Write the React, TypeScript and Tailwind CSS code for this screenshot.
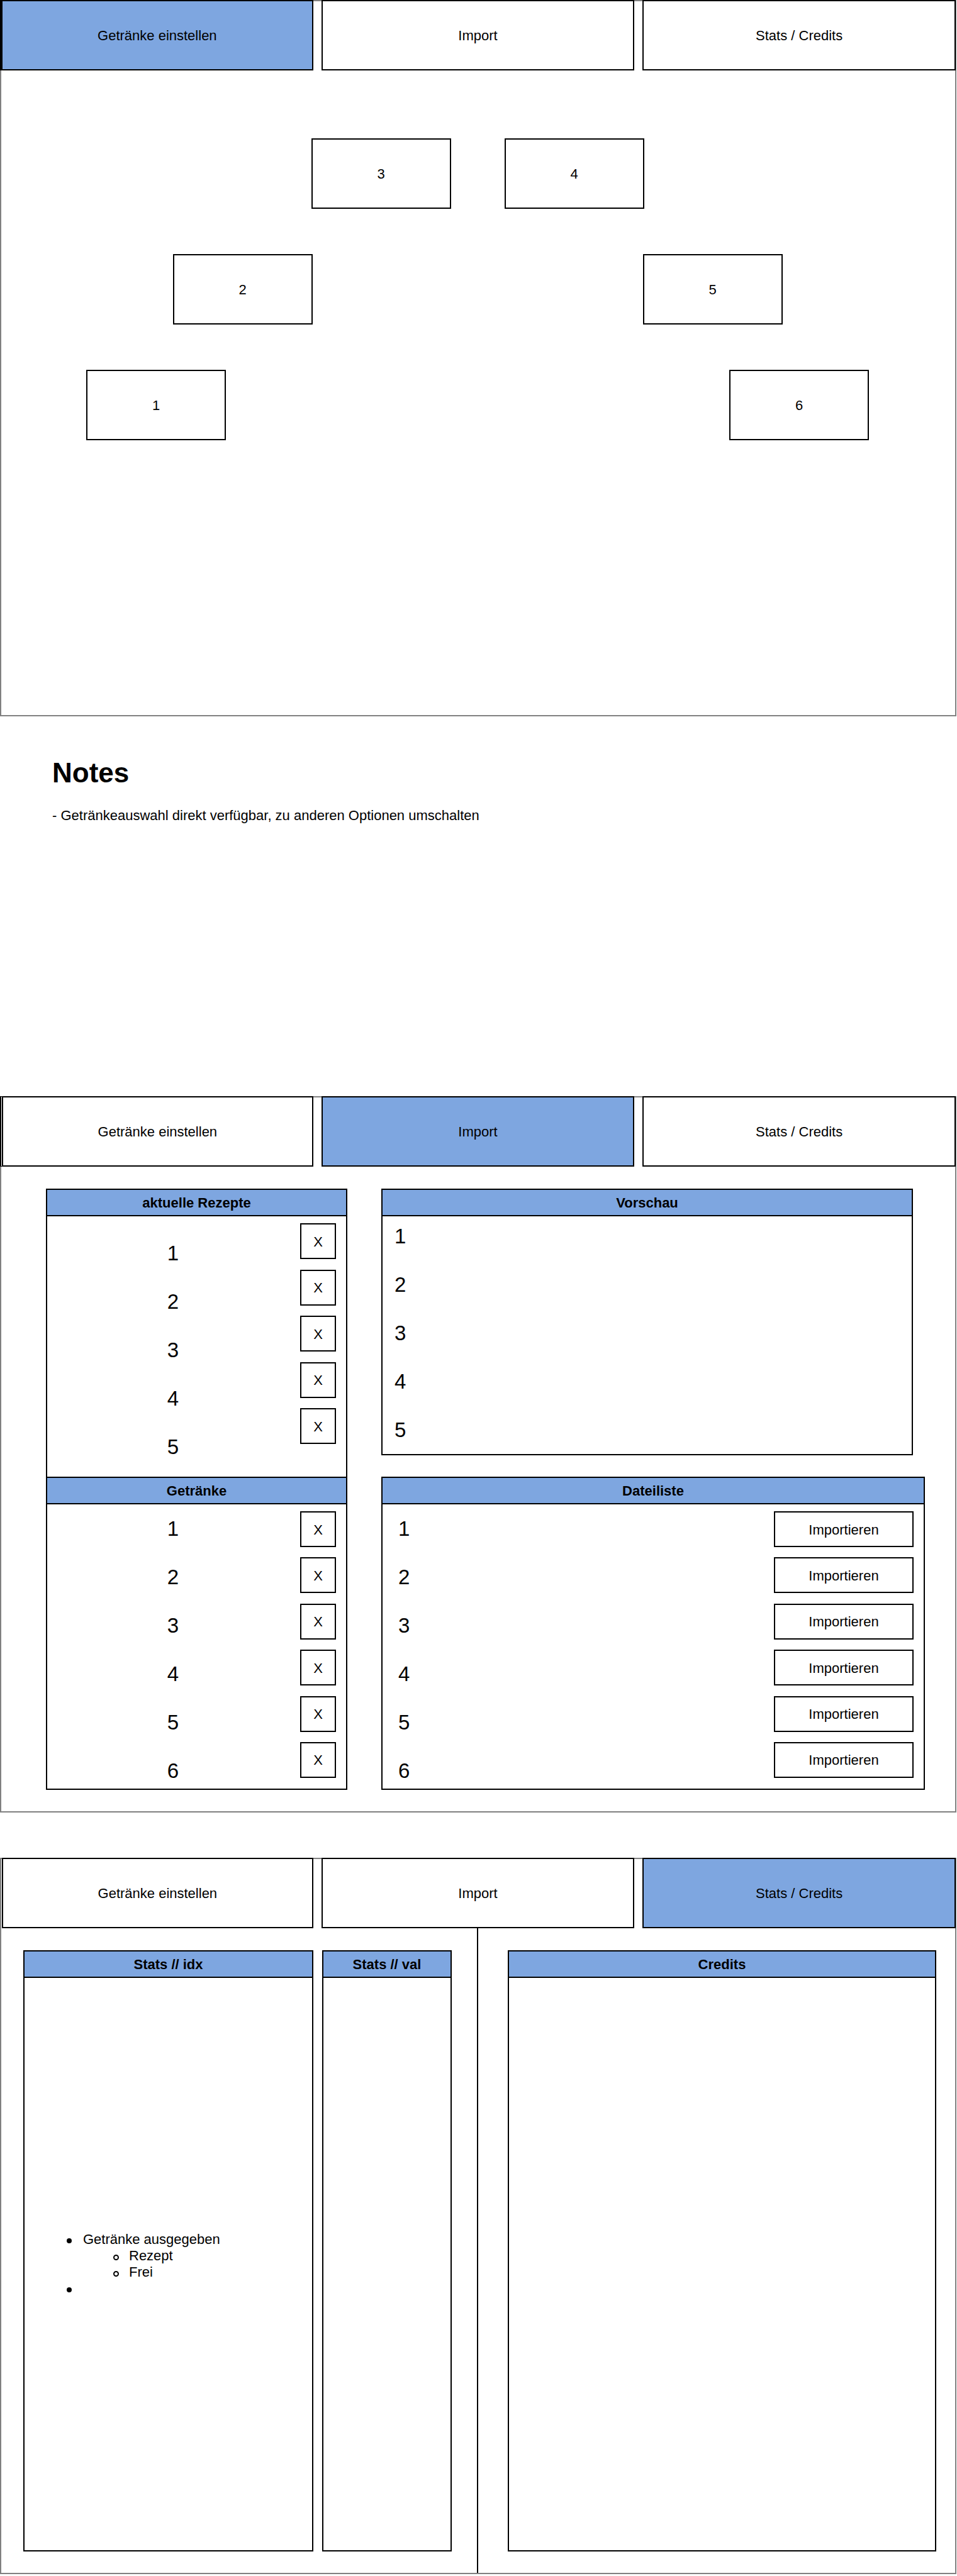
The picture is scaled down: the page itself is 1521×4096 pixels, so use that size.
import type { ReactNode } from "react";

const TAB_LABELS = ["Getränke einstellen", "Import", "Stats / Credits"];

function Screen({
  active,
  firstTabClass,
  className = "",
  children,
}: {
  active: number;
  firstTabClass: string;
  className?: string;
  children: ReactNode;
}) {
  return (
    <section
      className={`mr-px flex min-h-[1139px] flex-col border-2 border-[#808080] bg-white ${className}`}
    >
      <nav className="-mt-0.5 -mr-px -ml-0.5 grid grid-cols-3 gap-[13px]">
        {TAB_LABELS.map((label, i) => (
          <button
            key={label}
            type="button"
            aria-pressed={i === active}
            className={`h-28 border-2 border-black pt-0.5 ${
              i === active ? "bg-[#7ea6e0]" : "bg-white"
            } ${i === 0 ? firstTabClass : ""}`}
          >
            {label}
          </button>
        ))}
      </nav>
      {children}
    </section>
  );
}

function Panel({
  title,
  className = "",
  children,
}: {
  title: string;
  className?: string;
  children?: ReactNode;
}) {
  return (
    <section className={`flex flex-col border-2 border-black bg-white ${className}`}>
      <h2 className="flex h-[42px] shrink-0 items-center justify-center border-b-2 border-black bg-[#7ea6e0] pt-0.5 font-bold">
        {title}
      </h2>
      {children}
    </section>
  );
}

function Numbers({ count, className = "" }: { count: number; className?: string }) {
  return (
    <ol className={`flex flex-1 flex-col gap-[39px] text-[33px] leading-[38px] ${className}`}>
      {Array.from({ length: count }, (_, i) => (
        <li key={i}>{i + 1}</li>
      ))}
    </ol>
  );
}

function ButtonColumn({
  count,
  label,
  className = "",
}: {
  count: number;
  label: string;
  className?: string;
}) {
  return (
    <div className={`mt-[11px] mr-4 flex flex-col justify-between ${className}`}>
      {Array.from({ length: count }, (_, i) => (
        <button
          key={i}
          type="button"
          aria-label={`${label} ${i + 1}`}
          className="h-[57px] w-full border-2 border-black bg-white pt-0.5"
        >
          {label}
        </button>
      ))}
    </div>
  );
}

function DrinkRow({ items, className }: { items: number[]; className: string }) {
  return (
    <div className={`flex justify-center ${className}`}>
      {items.map((n) => (
        <button
          key={n}
          type="button"
          className="h-28 w-[222px] border-2 border-black bg-white pt-0.5"
        >
          {n}
        </button>
      ))}
    </div>
  );
}

function Bullet({ hollow = false }: { hollow?: boolean }) {
  return (
    <span
      aria-hidden="true"
      className={`mt-[11px] shrink-0 rounded-full ${
        hollow ? "mr-4 size-[9px] border-2 border-black" : "mr-[18px] size-2 bg-black"
      }`}
    />
  );
}

export default function App() {
  return (
    <main className="bg-white font-['Liberation_Sans',Arial,sans-serif] text-[22px] leading-[26px] text-black">
      <Screen active={0} firstTabClass="border-l-4">
        <div className="flex flex-col gap-[72px] pt-[108px] pr-0.5">
          <DrinkRow items={[3, 4]} className="gap-[85px]" />
          <DrinkRow items={[2, 5]} className="gap-[525px]" />
          <DrinkRow items={[1, 6]} className="gap-[800px]" />
        </div>
      </Screen>

      <article className="min-h-[604px] px-[83px] pt-[65px]">
        <h1 className="text-[44px] leading-[50px] font-bold">Notes</h1>
        <p className="mt-[30px]">
          - Getränkeauswahl direkt verfügbar, zu anderen Optionen umschalten
        </p>
      </article>

      <Screen active={1} firstTabClass="border-l-[5px] [border-left-style:double]">
        <div className="grid grid-cols-[479fr_864fr] gap-[54px] pt-[35px] pr-12 pl-[71px]">
          <div className="flex flex-col">
            <Panel title="aktuelle Rezepte" className="min-h-[460px]">
              <div className="flex items-start">
                <Numbers count={5} className="mt-10 pr-0.5 text-center" />
                <ButtonColumn count={5} label="X" className="h-[351px] w-[57px]" />
              </div>
            </Panel>
            <Panel title="Getränke" className="-mt-0.5 min-h-[498px]">
              <div className="flex items-start">
                <Numbers count={6} className="mt-5 pr-0.5 text-center" />
                <ButtonColumn count={6} label="X" className="h-[424px] w-[57px]" />
              </div>
            </Panel>
          </div>
          <div className="flex flex-col gap-[34px]">
            <Panel title="Vorschau" className="mr-[19px] min-h-[424px]">
              <Numbers count={5} className="mt-[13px] pl-[19px]" />
            </Panel>
            <Panel title="Dateiliste" className="min-h-[498px]">
              <div className="flex items-start">
                <Numbers count={6} className="mt-5 pl-[25px]" />
                <ButtonColumn count={6} label="Importieren" className="h-[424px] w-[222px]" />
              </div>
            </Panel>
          </div>
        </div>
      </Screen>

      <Screen active={2} firstTabClass="ml-[3px]" className="mt-[72px]">
        <div className="grid flex-1 grid-cols-2">
          <div className="grid grid-cols-[461fr_206fr] gap-3.5 border-r-2 border-black pt-[35px] pr-10 pb-[34px] pl-[35px]">
            <Panel title="Stats // idx">
              <div className="flex flex-1 flex-col justify-center pl-[67px]">
                <ul>
                  <li className="flex">
                    <Bullet />
                    <div>
                      Getränke ausgegeben
                      <ul className="pl-12">
                        <li className="flex">
                          <Bullet hollow />
                          Rezept
                        </li>
                        <li className="flex">
                          <Bullet hollow />
                          Frei
                        </li>
                      </ul>
                    </div>
                  </li>
                  <li className="flex min-h-[26px]">
                    <Bullet />
                  </li>
                </ul>
              </div>
            </Panel>
            <Panel title="Stats // val" />
          </div>
          <div className="flex pt-[35px] pr-[30px] pb-[34px] pl-[47px]">
            <Panel title="Credits" className="flex-1" />
          </div>
        </div>
      </Screen>
    </main>
  );
}
